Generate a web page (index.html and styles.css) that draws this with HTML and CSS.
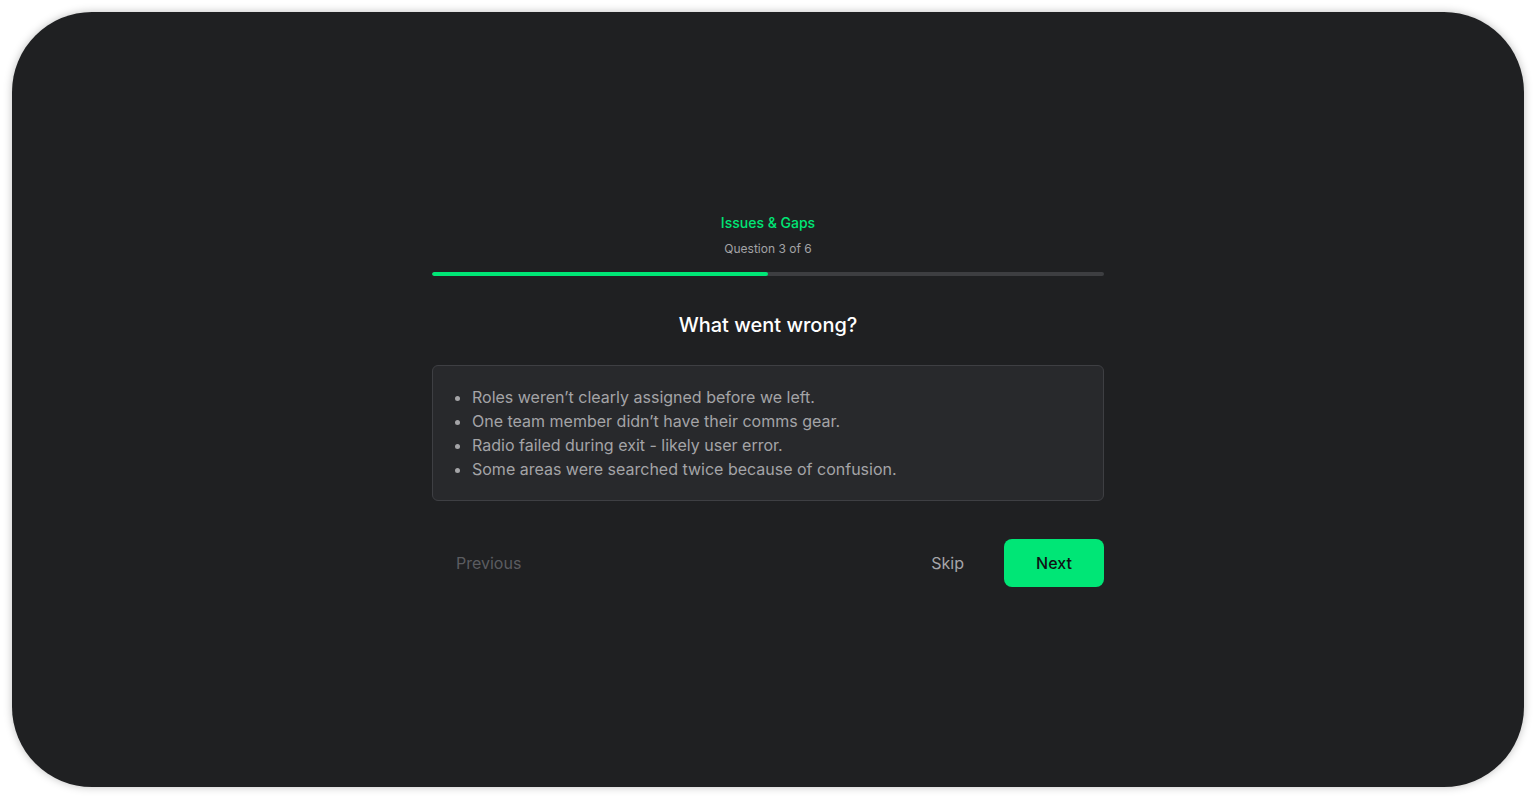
FILE: index.html
```html
<!DOCTYPE html>
<html lang="en">
<head>
<meta charset="utf-8">
<title>Issues &amp; Gaps</title>
<link rel="stylesheet" href="styles.css">
</head>
<body>
<div class="frame">
  <main class="panel">
    <section class="survey">
      <header class="head">
        <div class="section-title">Issues &amp; Gaps</div>
        <div class="counter">Question 3 of 6</div>
      </header>
      <div class="progress"><div class="progress-fill" style="width:50%"></div></div>
      <h1 class="question">What went wrong?</h1>
      <div class="answer">
        <ul class="answer-list">
          <li>Roles weren’t clearly assigned before we left.</li>
          <li>One team member didn’t have their comms gear.</li>
          <li>Radio failed during exit - likely user error.</li>
          <li>Some areas were searched twice because of confusion.</li>
        </ul>
      </div>
      <nav class="actions">
        <button class="btn btn-prev" disabled>Previous</button>
        <div class="actions-right">
          <button class="btn btn-skip">Skip</button>
          <button class="btn btn-next">Next</button>
        </div>
      </nav>
    </section>
  </main>
</div>
</body>
</html>
```

FILE: styles.css
```css
* { box-sizing: border-box; }
html, body { margin: 0; padding: 0; }
body {
  background: #ffffff;
  font-family: Inter, "Noto Sans", "Liberation Sans", sans-serif;
  width: 1536px;
  height: 799px;
  overflow: hidden;
}
.frame {
  padding: 12px;
  height: 799px;
}
.panel {
  height: 775px;
  background: #1f2022;
  border-radius: 80px;
  box-shadow: 0 0 8px rgba(0,0,0,0.25);
  display: flex;
  align-items: center;
  justify-content: center;
}
.survey {
  width: 672px;
  display: flex;
  flex-direction: column;
}
.head {
  text-align: center;
  display: flex;
  flex-direction: column;
  align-items: center;
}
.section-title {
  color: #00e676;
  font-size: 14px;
  font-weight: 500;
  line-height: 20px;
}
.counter {
  color: #a3a3a6;
  font-size: 12px;
  line-height: 16px;
  margin-top: 8px;
}
.progress {
  margin-top: 15px;
  height: 4px;
  background: #3d3e41;
  border-radius: 2px;
  overflow: hidden;
}
.progress-fill {
  height: 100%;
  background: #00e676;
  border-radius: 2px;
}
.question {
  margin: 35px 0 0;
  text-align: center;
  color: #ffffff;
  font-size: 20px;
  font-weight: 500;
  line-height: 28px;
}
.answer {
  margin-top: 26px;
  background: #28292c;
  border: 1px solid #3e3f43;
  border-radius: 6px;
  padding: 19px 24px 19px;
}
.answer-list {
  margin: 0;
  padding-left: 15px;
  color: #a4a4a7;
  font-size: 16px;
  line-height: 24px;
}
.actions {
  margin-top: 38px;
  display: flex;
  justify-content: space-between;
  align-items: center;
}
.actions-right {
  display: flex;
  gap: 16px;
  align-items: center;
}
.btn {
  font-family: inherit;
  font-size: 16px;
  height: 48px;
  border: none;
  background: transparent;
  padding: 0 24px;
  border-radius: 8px;
  cursor: pointer;
}
.btn-prev { color: #5b5c60; }
.btn-skip { color: #a6a6a9; }
.btn-next {
  width: 100px;
  background: #00e676;
  color: #111214;
  font-weight: 500;
}
```
